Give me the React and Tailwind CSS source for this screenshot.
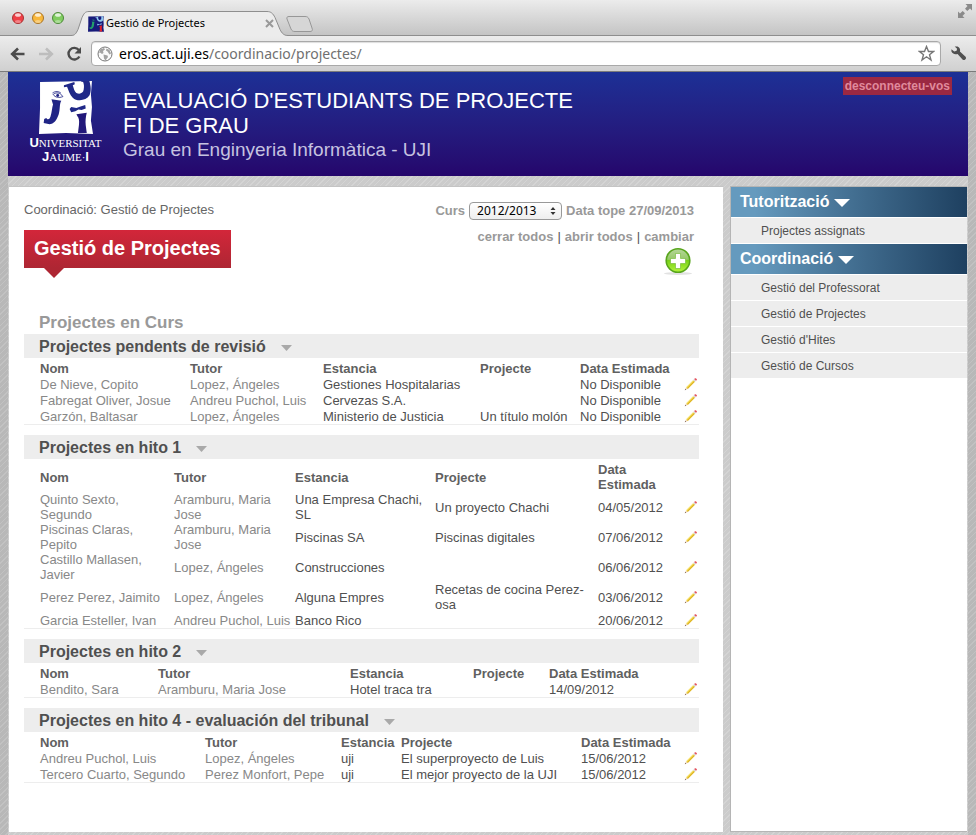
import React from "react";

const SECTIONS = [
  {
    title: "Projectes pendents de revisió",
    cols: ["w-[150px]", "w-[133px]", "w-[157px]", "w-[100px]", "w-[104px]"],
    rows: [
      ["De Nieve, Copito", "Lopez, Ángeles", "Gestiones Hospitalarias", "", "No Disponible"],
      ["Fabregat Oliver, Josue", "Andreu Puchol, Luis", "Cervezas S.A.", "", "No Disponible"],
      ["Garzón, Baltasar", "Lopez, Ángeles", "Ministerio de Justicia", "Un título molón", "No Disponible"],
    ],
  },
  {
    title: "Projectes en hito 1",
    cols: ["w-[134px]", "w-[121px]", "w-[140px]", "w-[163px]", "w-[86px]"],
    rows: [
      ["Quinto Sexto, Segundo", "Aramburu, Maria Jose", "Una Empresa Chachi, SL", "Un proyecto Chachi", "04/05/2012"],
      ["Piscinas Claras, Pepito", "Aramburu, Maria Jose", "Piscinas SA", "Piscinas digitales", "07/06/2012"],
      ["Castillo Mallasen, Javier", "Lopez, Ángeles", "Construcciones", "", "06/06/2012"],
      ["Perez Perez, Jaimito", "Lopez, Ángeles", "Alguna Empres", "Recetas de cocina Perez-osa", "03/06/2012"],
      ["Garcia Esteller, Ivan", "Andreu Puchol, Luis", "Banco Rico", "", "20/06/2012"],
    ],
  },
  {
    title: "Projectes en hito 2",
    cols: ["w-[118px]", "w-[192px]", "w-[123px]", "w-[76px]", "w-[135px]"],
    rows: [["Bendito, Sara", "Aramburu, Maria Jose", "Hotel traca tra", "", "14/09/2012"]],
  },
  {
    title: "Projectes en hito 4 - evaluación del tribunal",
    cols: ["w-[165px]", "w-[136px]", "w-[60px]", "w-[180px]", "w-[103px]"],
    rows: [
      ["Andreu Puchol, Luis", "Lopez, Ángeles", "uji", "El superproyecto de Luis", "15/06/2012"],
      ["Tercero Cuarto, Segundo", "Perez Monfort, Pepe", "uji", "El mejor proyecto de la UJI", "15/06/2012"],
    ],
  },
];

const HEADINGS = ["Nom", "Tutor", "Estancia", "Projecte", "Data Estimada"];

const MENU = [
  { title: "Tutorització", items: ["Projectes assignats"] },
  { title: "Coordinació", items: ["Gestió del Professorat", "Gestió de Projectes", "Gestió d'Hites", "Gestió de Cursos"] },
];

function Pencil() {
  return (
    <svg width="14" height="14" viewBox="0 0 14 14" className="block" aria-hidden="true">
      <path d="M1 13l1-2.800 1.800 1.800z" fill="#ecd6bb" />
      <path d="M.8 13.200l.5-1.400.9.900z" fill="#7a5a48" />
      <path d="M2 10.200L9.200 3l1 1-7.200 7.200z" fill="#f7e36a" />
      <path d="M2.800 11L10 3.800l1 1L3.800 12z" fill="#e0b51c" />
      <path d="M9.200 3l1-1 1.800 1.800-1 1z" fill="#d3d8dc" />
      <path d="M10.200 2l.8-.7c.9-.6 2.400.8 1.800 1.800l-.8.7z" fill="#e5505c" />
    </svg>
  );
}

function Caret({ className, w, h }) {
  return (
    <svg width={w} height={h} viewBox="0 0 10 6" preserveAspectRatio="none" className={className} aria-hidden="true">
      <path d="M0 0h10L5 6z" fill="currentColor" />
    </svg>
  );
}

function Figures({ paper, ink, second, third }) {
  return (
    <>
      <path d="M1 1l50-1-1 13 1 12-1 13 2 13-26-1-26 1 1-25z" fill={paper} />
      <path d="M12 17.500l9.500 1.500c-2 3-1 8-2.500 13-2 6-5 10-10 9.500l-4.500-1 .5-4 2-1c1 2 3 2 4-1 1.500-5 1.500-9 2.500-12z" fill={ink} />
      <path d="M13.500 13c3-2.500 7-2 9.500 2-4 1.500-7 1-9.500-2z" fill={paper} stroke={ink} strokeWidth=".8" />
      <path d="M13 11.500c3-2 6-1.500 8 0" fill="none" stroke={ink} strokeWidth=".8" />
      <circle cx="18" cy="14" r="1.400" fill={ink} />
      <path d="M24 4l10-3 .5 2-2 1c1 3 1.500 6 3.500 7.500 3 1.500 6.500.5 7-3 .5-3 .5-5-.5-7.500l-2-.5V0h8c1.500 5 2 10 0 14-3 5-12 6-16 2-3-3-4-7-5.500-10.500l-3 .5z" fill={second} />
      <path d="M29.500 27l1.500-2 5 1 4-1.500L44.500 23l.5 3.500-4 1.500-3-.5-3 1.500-4 1z" fill={second} />
      <path d="M36 32l10-1.500c-1 4-1.500 8-1 12l1 7.500h-8.500l1-8c.5-4-.2-6.500-1.500-8z" fill={third} />
    </>
  );
}

function ProjectSection({ section }) {
  return (
    <section className="mb-2.5">
      <h3 className="flex h-6 items-center bg-[#ededed] pl-[15px] pt-0.5 text-[16px] font-bold leading-5 text-[#505050]">
        {section.title}
        <button type="button" aria-label={"Plegar " + section.title} className="ml-[15px] mt-0.5 text-[#a9a9a9]">
          <Caret w={11} h={6} className="block" />
        </button>
      </h3>
      <div className="border-b border-[#ededed] pl-4 pt-[3px]">
        <table className="w-full table-fixed text-left text-[13px] leading-[15px]">
          <colgroup>
            {section.cols.map((c, i) => (
              <col key={i} className={c} />
            ))}
            <col className="w-[15px]" />
          </colgroup>
          <thead>
            <tr className="text-[#606060]">
              {HEADINGS.map((h) => (
                <th key={h} scope="col" className="p-0 pr-0.5 font-bold">{h}</th>
              ))}
              <td />
            </tr>
          </thead>
          <tbody>
            {section.rows.map((row) => (
              <tr key={row[0]} className="h-4">
                {row.map((cell, i) => (
                  <td key={i} className={i < 2 ? "p-0 pr-0.5 text-[#888]" : "p-0 pr-0.5 text-[#505050]"}>{cell}</td>
                ))}
                <td className="p-0">
                  <button type="button" aria-label={"Editar " + row[0]} className="block">
                    <Pencil />
                  </button>
                </td>
              </tr>
            ))}
          </tbody>
        </table>
      </div>
    </section>
  );
}

function Light({ fill, edge }) {
  return (
    <svg width="14" height="14" viewBox="0 0 14 14" aria-hidden="true">
      <circle cx="7" cy="7" r="5.500" fill={fill} stroke={edge} />
      <ellipse cx="7" cy="4" rx="3" ry="1.800" fill="#fff" opacity=".75" />
      <ellipse cx="7" cy="10.500" rx="3" ry="1.500" fill="#fff" opacity=".35" />
    </svg>
  );
}

function Browser() {
  return (
    <div className="font-['Noto_Sans',sans-serif]">
      <div className="flex h-9 items-end bg-linear-to-b from-[#ececec] to-[#c3c3c3] shadow-[inset_0_-1px_0_#8e8e8e]">
        <div className="flex gap-1.5 self-center pl-[11px]">
          <Light fill="#ee3f46" edge="#a33" />
          <Light fill="#f8b73a" edge="#a97528" />
          <Light fill="#80cc60" edge="#4d8a3a" />
        </div>
        <div className="relative ml-1.5 h-[25px] w-[222px]">
          <svg width="222" height="25" viewBox="0 0 222 25" className="absolute inset-0" aria-hidden="true">
            <path d="M0 24.500c4 0 5-2 7-6l4-12c2-4 3-6 7-6h178c4 0 6 2 8 6l5 12c2 4 4 6 8 6V25H0z" fill="#ececec" />
            <path d="M0 24.500c4 0 5-2 7-6l4-12c2-4 3-6 7-6h178c4 0 6 2 8 6l5 12c2 4 4 6 8 6" fill="none" stroke="#8e8e8e" />
          </svg>
          <div className="relative flex h-full items-center pl-[17px] pr-[19px]">
            <svg width="16" height="16" viewBox="0 0 52 51" aria-hidden="true">
              <Figures paper="#171a7a" ink="#23a06b" second="#8fc6ee" third="#e0202c" />
            </svg>
            <span className="ml-0.5 flex-1 whitespace-nowrap text-[11px] text-black">Gestió de Projectes</span>
            <button type="button" aria-label="Tancar la pestanya" className="text-[#999]">
              <svg width="9" height="9" viewBox="0 0 9 9" aria-hidden="true">
                <path d="M1 1l7 7M8 1l-7 7" stroke="currentColor" strokeWidth="2" />
              </svg>
            </button>
          </div>
        </div>
        <button type="button" aria-label="Pestanya nova" className="mb-1 -ml-[7px]">
          <svg width="27" height="16" viewBox="0 0 27 16" className="block" aria-hidden="true">
            <path d="M3 .5h16c2 0 3 .5 4 2.500l3 9c1 2.500 0 3.500-2 3.500H9c-2 0-3-.5-4-2.500L1 3C.5 1.500 1 .5 3 .5z" fill="#d6d6d6" stroke="#979797" />
          </svg>
        </button>
        <button type="button" aria-label="Pantalla completa" className="mb-auto ml-auto mr-1 mt-1 text-[#8a8a8a]">
          <svg width="14" height="14" viewBox="0 0 14 14" className="block" aria-hidden="true">
            <path d="M7.500 0H14v6.500l-2-2L9.300 7 7 4.700 9.500 2zM0 14V7.500l2 2L4.700 7 7 9.300 4.500 12l2 2z" fill="currentColor" />
          </svg>
        </button>
      </div>
      <div className="flex h-9 items-center border-b border-[#7b7b7b] bg-linear-to-b from-[#ececec] to-[#d0d0d0]">
        <button type="button" aria-label="Enrere" className="ml-2.5 text-[#4b4b4b]">
          <svg width="16" height="14" viewBox="0 0 16 14" className="block" aria-hidden="true">
            <path d="M14.500 7H3M8 1.500L2.200 7 8 12.500" fill="none" stroke="currentColor" strokeWidth="2.600" />
          </svg>
        </button>
        <button type="button" aria-label="Avant" className="ml-3 text-[#bdbdbd]">
          <svg width="16" height="14" viewBox="0 0 16 14" className="block" aria-hidden="true">
            <path d="M1 7h12M8 1.500L13.800 7 8 12.500" fill="none" stroke="currentColor" strokeWidth="2.600" />
          </svg>
        </button>
        <button type="button" aria-label="Recarregar" className="ml-3 text-[#4b4b4b]">
          <svg width="16" height="16" viewBox="0 0 16 16" className="block" aria-hidden="true">
            <path d="M12.800 4A5.800 5.800 0 1 0 13.400 10.500" fill="none" stroke="currentColor" strokeWidth="2.400" />
            <path d="M15 1v6.500H8.500z" fill="currentColor" />
          </svg>
        </button>
        <div className="ml-[9px] flex h-[25px] flex-1 items-center rounded border border-[#a9a9a9] bg-white px-[5px] shadow-[inset_0_1px_1px_#ddd]">
          <svg width="16" height="16" viewBox="0 0 16 16" aria-hidden="true">
            <circle cx="8" cy="8" r="7" fill="#fafafa" stroke="#777" />
            <path d="M3 3.500l4-1.500 1 1.500-2 1.500.5 2-1.500 1-2-1.500-1 .5zM9.500 2.500l3 1.500 1.500 3.500-1.500 1-2-3-1.500-1zM6.500 8.500l4 1 .5 1.500-2.500 3.500-1.500-2z" fill="#a2a2a2" />
          </svg>
          <label htmlFor="address" className="ml-1.5 text-[14px] leading-5 text-black">eros.act.uji.es</label>
          <input
            id="address"
            type="text"
            defaultValue="/coordinacio/projectes/"
            className="h-5 min-w-0 flex-1 bg-transparent text-[14px] leading-5 text-[#707070] outline-none"
          />
          <button type="button" aria-label="Afegir a marcadors" className="text-[#777]">
            <svg width="17" height="17" viewBox="0 0 17 17" className="block" aria-hidden="true">
              <path d="M8.500 1.500l2 5h5l-4 3.200 1.500 5.300-4.500-3.200L4 15l1.500-5.300-4-3.200h5z" fill="none" stroke="currentColor" strokeWidth="1.400" />
            </svg>
          </button>
        </div>
        <button type="button" aria-label="Configuració" className="mx-[9px] text-[#505050]">
          <svg width="17" height="17" viewBox="0 0 18 18" className="block" aria-hidden="true">
            <path d="M5 1.500l3 0c2.500 1 3.200 3.500 2.500 5.500l6 5.500c1.500 2-1 4.500-3 3l-5.500-6C5.500 10 3 10 1.500 7V4.500l3 2.500 2.500-1 .5-2z" fill="currentColor" />
          </svg>
        </button>
      </div>
    </div>
  );
}

export default function App() {
  return (
    <div className="flex min-h-screen flex-col">
      <Browser />
      <div className="flex flex-1 flex-col bg-[repeating-linear-gradient(135deg,#b8b8b8_0px,#b8b8b8_3px,#c2c2c2_3px,#c2c2c2_4px)] px-2 font-['Liberation_Sans',Arial,sans-serif]">
        <div className="flex flex-1 flex-col bg-[repeating-linear-gradient(135deg,#cbcbcb_0px,#cbcbcb_3px,#d4d4d4_3px,#d4d4d4_4px)]">
          <header className="flex h-[104px] items-start bg-linear-to-b from-[#1c3096] to-[#25066c]">
            <div className="ml-[19px] mt-[9px] flex w-[77px] flex-col items-center whitespace-nowrap font-['Liberation_Serif',serif] text-[11px] leading-[13px] text-white">
              <svg width="54" height="53" viewBox="0 0 52 51" role="img" aria-label="UJI">
                <Figures paper="#fff" ink="#202486" second="#1f2888" third="#22187a" />
              </svg>
              <span className="mt-0.5"><b className="font-['Liberation_Sans',sans-serif] text-[13px] font-black">U</b>NIVERSITAT</span>
              <span><b className="font-['Liberation_Sans',sans-serif] text-[13px] font-black">J</b>AUME·<b className="font-['Liberation_Sans',sans-serif] text-[13px] font-black">I</b></span>
            </div>
            <div className="ml-[19px] mt-4 flex-1">
              <h1 className="max-w-[470px] text-[22px] leading-[25px] text-white">EVALUACIÓ D'ESTUDIANTS DE PROJECTE FI DE GRAU</h1>
              <p className="text-[19px] leading-6 text-[#c6c3e0]">Grau en Enginyeria Informàtica - UJI</p>
            </div>
            <a href="#logout" className="mr-4 mt-[5px] bg-[#9b2842] px-0.5 text-[12px] font-bold leading-[18px] text-[#e08a9c]">desconnecteu-vos</a>
          </header>

          <div className="flex flex-1 items-stretch gap-[7px] px-px pb-[3px] pt-2.5">
            <main className="min-w-0 flex-1 border-t border-[#c4c4c4] bg-white pl-[15px] pr-6">
              <div className="flex h-[126px] justify-between">
                <div>
                  <p className="mt-[15px] text-[13px] leading-4 text-[#666]">Coordinació: Gestió de Projectes</p>
                  <h2 className="relative mt-3 flex h-[38px] items-center bg-linear-to-b from-[#d3263a] to-[#ae2633] px-2.5 pb-0.5 text-[20px] font-bold text-white">
                    Gestió de Projectes
                    <Caret w={20} h={10} className="absolute left-5 top-full text-[#ae2633]" />
                  </h2>
                </div>
                <div className="flex flex-col items-end pr-[5px] text-[13px] font-bold text-[#999]">
                  <div className="mt-[15px] flex h-[18px] items-center gap-1 leading-4">
                    <label htmlFor="curs">Curs</label>
                    <span className="relative">
                      <select id="curs" defaultValue="2012/2013" className="block h-[18px] w-[93px] appearance-none rounded border border-[#999] bg-linear-to-b from-white to-[#eee] pl-[7px] font-['Noto_Sans',sans-serif] text-[12px] font-normal leading-4 text-black">
                        <option>2012/2013</option>
                      </select>
                      <svg width="6" height="8" viewBox="0 0 6 8" className="pointer-events-none absolute right-1.5 top-[5px]" aria-hidden="true">
                        <path d="M0.500 3h5L3 0zM0.500 5h5L3 8z" fill="#333" />
                      </svg>
                    </span>
                    <span>Data tope 27/09/2013</span>
                  </div>
                  <div className="mt-[9px] flex gap-1 leading-4">
                    <a href="#cerrar">cerrar todos</a>
                    <span className="font-normal text-[#555]">|</span>
                    <a href="#abrir">abrir todos</a>
                    <span className="font-normal text-[#555]">|</span>
                    <a href="#cambiar">cambiar</a>
                  </div>
                  <button type="button" aria-label="Afegir projecte" className="mt-0.5">
                    <svg width="32" height="29" viewBox="0 0 32 29" className="block" aria-hidden="true">
                      <defs>
                        <linearGradient id="add" x1="0" y1="0" x2="0" y2="1">
                          <stop offset="0" stopColor="#b5d79a" />
                          <stop offset=".45" stopColor="#97c96a" />
                          <stop offset=".5" stopColor="#78d018" />
                          <stop offset="1" stopColor="#b4f53c" />
                        </linearGradient>
                      </defs>
                      <ellipse cx="16" cy="26.500" rx="14" ry="1.500" fill="#e2e2e2" />
                      <circle cx="16" cy="13.500" r="11.800" fill="url(#add)" stroke="#58a51c" strokeWidth="1.600" />
                      <path d="M13.500 6.500h5v5h5v5h-5v5h-5v-5h-5v-5h5z" fill="#fff" stroke="#6db52b" strokeWidth=".6" />
                    </svg>
                  </button>
                </div>
              </div>
              <h2 className="pb-0.5 pl-[15px] text-[17px] font-bold leading-[19px] text-[#999]">Projectes en Curs</h2>
              {SECTIONS.map((s) => (
                <ProjectSection key={s.title} section={s} />
              ))}
            </main>

            <nav className="w-[237px] shrink-0 border-b border-l border-t border-[#b5b5b5] bg-white">
              {MENU.map((group) => (
                <div key={group.title}>
                  <h3 className="bg-linear-to-r from-[#659abe] from-10% to-[#1e4060] text-[16px] font-bold text-white">
                    <button type="button" className="flex h-[30px] w-full items-center gap-[5px] pl-[9px]">
                      {group.title}
                      <Caret w={16} h={8} className="mt-0.5" />
                    </button>
                  </h3>
                  <ul className="mb-px mt-px flex flex-col gap-px">
                    {group.items.map((item) => (
                      <li key={item} className="bg-[#ededed]">
                        <a href="#item" className="block pl-[30px] pt-px text-[12px] leading-6 text-[#505050]">{item}</a>
                      </li>
                    ))}
                  </ul>
                </div>
              ))}
            </nav>
          </div>
        </div>
      </div>
    </div>
  );
}
